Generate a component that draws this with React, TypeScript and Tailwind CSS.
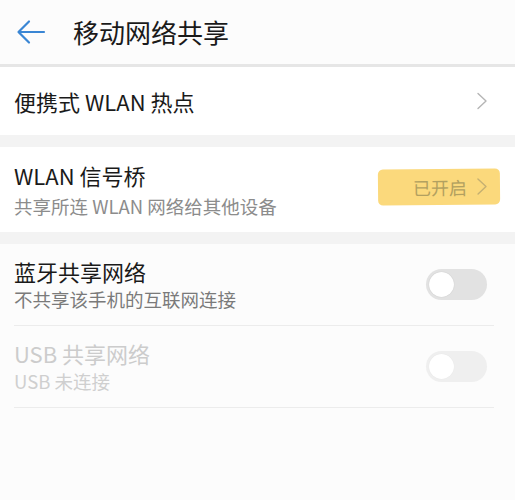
import React from 'react';

const Chevron: React.FC<{ className?: string }> = ({ className }) => (
  <svg width="12" height="18" viewBox="0 0 12 18" className={className} fill="none">
    <path d="M2 1.5 L10 9 L2 16.5" stroke="currentColor" strokeWidth="1.4" strokeLinecap="round" strokeLinejoin="round" />
  </svg>
);

const Toggle: React.FC<{ faded?: boolean }> = ({ faded }) => (
  <div className={`w-[61px] h-[31px] rounded-full flex items-center px-[3px] ${faded ? 'bg-[#efefef]' : 'bg-[#e2e2e2]'}`}>
    <div className={`w-[25px] h-[25px] rounded-full bg-white ${faded ? 'shadow-[0_0_1px_rgba(0,0,0,0.08)]' : 'shadow-[0_0_1px_rgba(0,0,0,0.2)]'}`} />
  </div>
);

export default function App() {
  return (
    <div className="w-[515px] h-[500px] bg-[#fcfcfc] flex flex-col" style={{ fontFamily: '"Noto Sans CJK SC", "Noto Sans", sans-serif' }}>
      {/* Header */}
      <div className="h-[64px] flex items-center bg-[#fcfcfc]">
        <svg width="30" height="26" viewBox="0 0 30 26" className="ml-[16px]" fill="none">
          <path d="M28 13 H3 M13 2.5 L2.5 13 L13 23.5" stroke="#3a86d4" strokeWidth="2.2" strokeLinecap="round" strokeLinejoin="round" />
        </svg>
        <span className="ml-[27px] text-[26px] leading-none text-[#1a1a1a]">移动网络共享</span>
      </div>
      <div className="h-[3px] bg-[#e6e6e6]" />

      {/* Hotspot */}
      <div className="h-[68px] flex items-center justify-between pl-[14px] pr-[27px] bg-white">
        <span className="text-[22px] text-[#1a1a1a]">便携式 WLAN 热点</span>
        <Chevron className="text-[#b5b5b5]" />
      </div>
      <div className="h-[12px] bg-[#f3f3f3]" />

      {/* WLAN bridge */}
      <div className="h-[85px] flex items-center justify-between pl-[14px] pr-[15px] bg-white">
        <div className="flex flex-col">
          <span className="text-[22px] leading-[30px] text-[#1a1a1a]">WLAN 信号桥</span>
          <span className="text-[18.5px] leading-[28px] text-[#8c8c8c] mt-[2px]">共享所连 WLAN 网络给其他设备</span>
        </div>
        <div className="w-[122px] h-[36px] -mt-[6px] bg-[#fbd97c] rounded-[5px] -rotate-[0.6deg] flex items-center justify-end gap-[9px] pr-[12px]">
          <span className="text-[18px] text-[#b2a060]">已开启</span>
          <Chevron className="text-[#c5b072]" />
        </div>
      </div>
      <div className="h-[12px] bg-[#f3f3f3]" />

      {/* Bluetooth / USB */}
      <div className="pl-[14px] pr-[21px] flex flex-col bg-[#fcfcfc]">
        <div className="h-[82px] flex items-center justify-between pr-[7px] border-b border-[#ececec]">
          <div className="flex flex-col -mt-[2px]">
            <span className="text-[22px] leading-[30px] text-[#1a1a1a]">蓝牙共享网络</span>
            <span className="text-[18.5px] leading-[26px] text-[#7a7a7a]">不共享该手机的互联网连接</span>
          </div>
          <Toggle />
        </div>
        <div className="h-[82px] flex items-center justify-between pr-[7px] border-b border-[#ececec]">
          <div className="flex flex-col -mt-[2px]">
            <span className="text-[22px] leading-[30px] text-[#cccccc]">USB 共享网络</span>
            <span className="text-[18.5px] leading-[26px] text-[#cfcfcf]">USB 未连接</span>
          </div>
          <Toggle faded />
        </div>
      </div>
    </div>
  );
}
